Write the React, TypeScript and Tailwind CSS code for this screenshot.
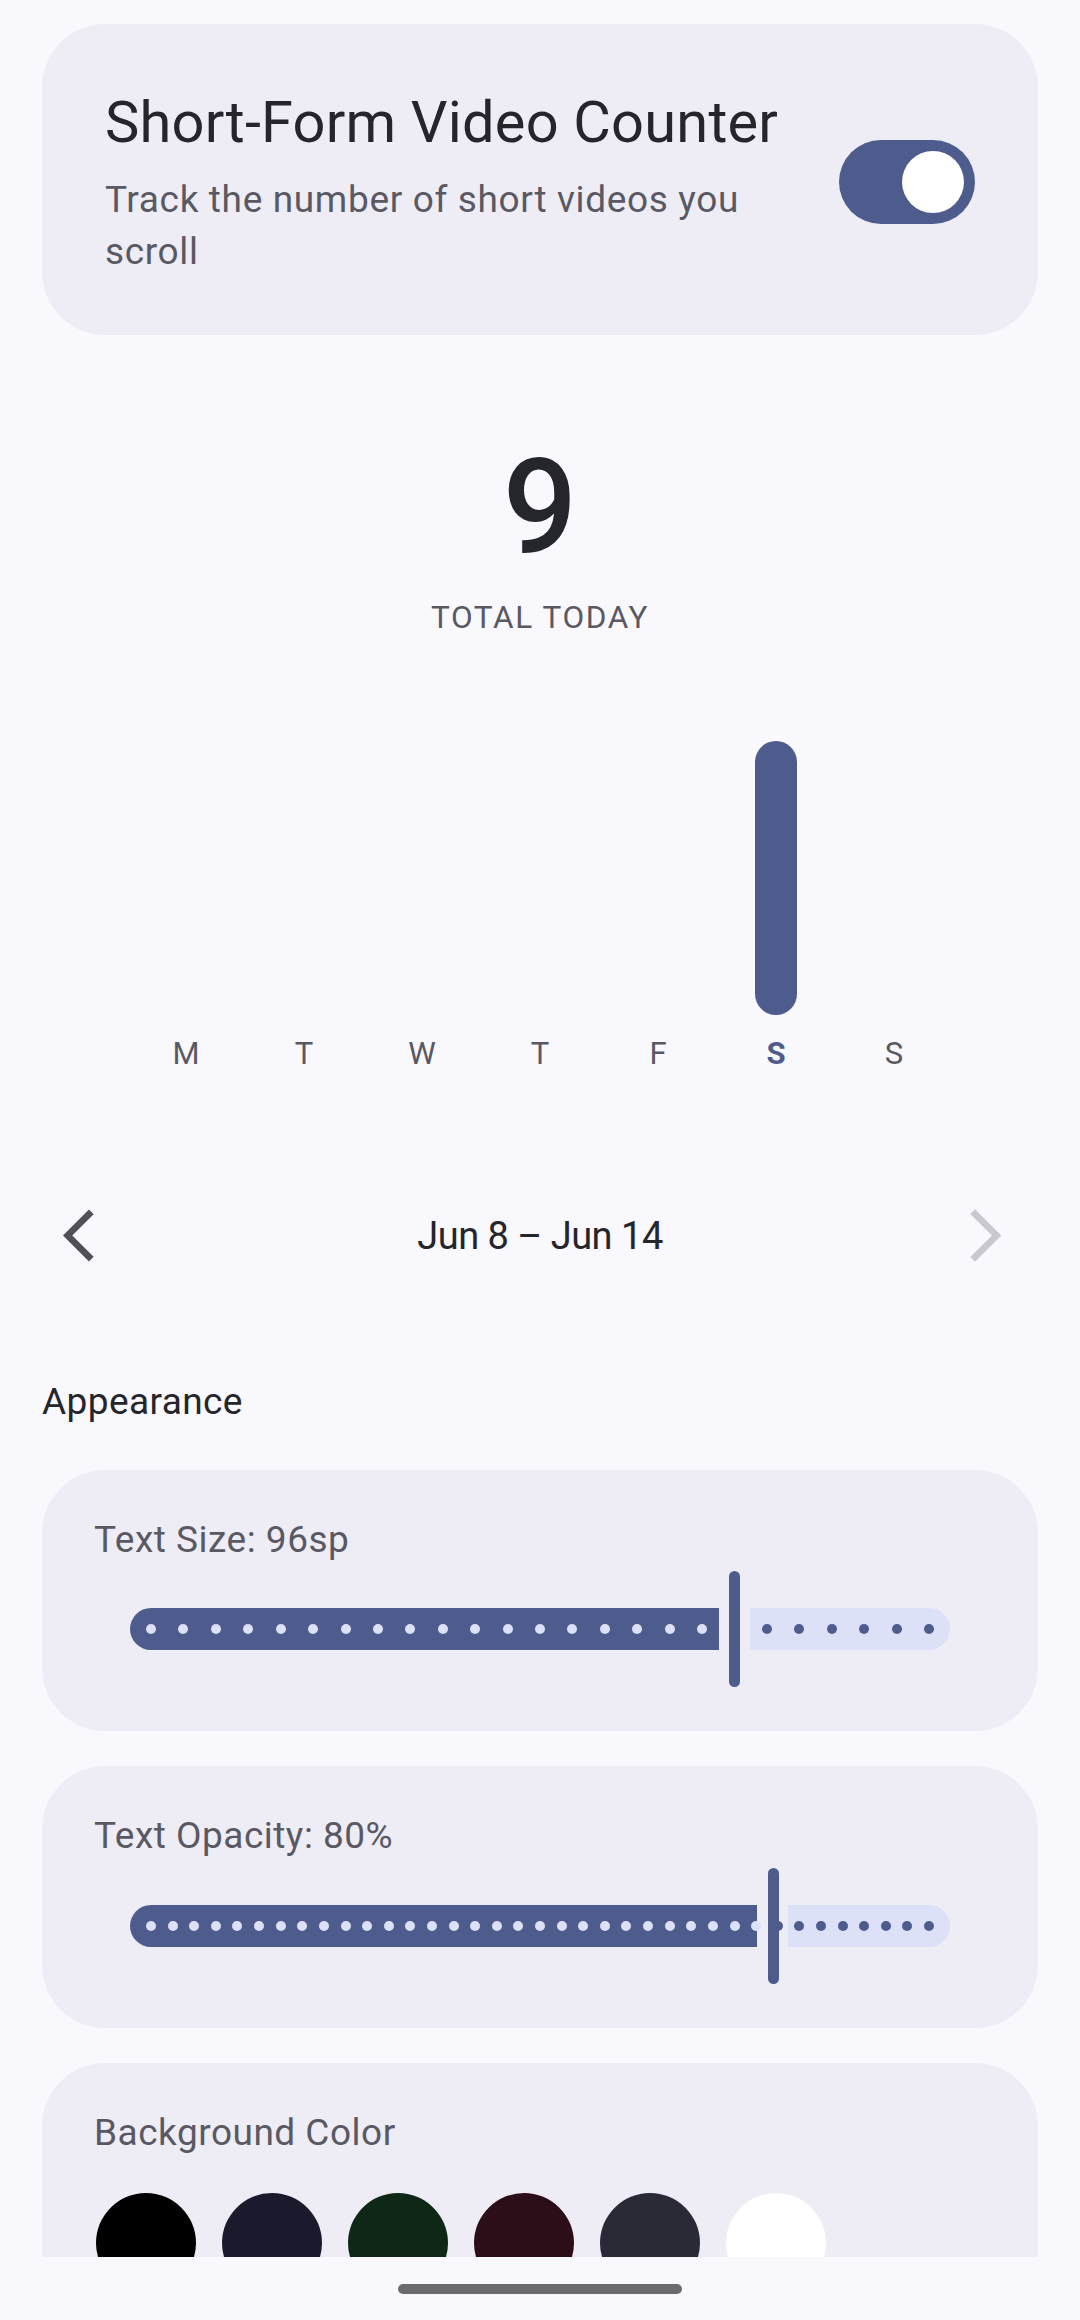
import React from 'react';

const days = [
    { label: 'M', count: 0 },
    { label: 'T', count: 0 },
    { label: 'W', count: 0 },
    { label: 'T', count: 0 },
    { label: 'F', count: 0 },
    { label: 'S', count: 9, today: true },
    { label: 'S', count: 0 },
];

const swatches = ['#000000', '#1b1a2d', '#0e2717', '#2c0e18', '#2a2936', '#ffffff'];

// Slider with stop dots, thumb as a thin vertical bar (Material 3 style)
const StopSlider: React.FC<{ value: number; steps: number }> = ({ value, steps }) => {
    const pos = (f: number, off: number) => `calc(21px + (100% - 42px) * ${f} + ${off}px)`;
    const dots = Array.from({ length: steps + 1 }, (_, i) => i / steps);

    return (
        <div className="relative h-[116px] mx-[36px]">
            <div
                className="absolute top-[37px] h-[42px] left-0 bg-[#4d5c8c] rounded-l-full rounded-r-[5px]"
                style={{ width: pos(value, -16) }}
            />
            <div
                className="absolute top-[37px] h-[42px] right-0 bg-[#dce1f8] rounded-r-full rounded-l-[5px]"
                style={{ left: pos(value, 15) }}
            />
            {dots.map((f, i) => (
                <div
                    key={i}
                    className={`absolute top-[53px] w-[10px] h-[10px] rounded-full ${f < value ? 'bg-[#dce1f8]' : 'bg-[#4d5c8c]'}`}
                    style={{ left: pos(f, -5) }}
                />
            ))}
            <div
                className="absolute top-0 h-[116px] w-[11px] rounded-full bg-[#4d5c8c]"
                style={{ left: pos(value, -5.5) }}
            />
        </div>
    );
};

const SettingCard: React.FC<{ label: string; children: React.ReactNode; className?: string }> = ({ label, children, className }) => (
    <div className={`bg-[#eeedf6] rounded-[63px] px-[52px] pt-[44px] pb-[44px] ${className || ''}`}>
        <p className="text-[37px] leading-[52.5px] tracking-[0.5px] text-[#5a5963]">{label}</p>
        {children}
    </div>
);

export default function App() {
    const max = Math.max(...days.map(d => d.count), 1);

    return (
        <div className="w-[1080px] h-[2320px] bg-[#f9f8fd] flex flex-col font-['Roboto',sans-serif] overflow-hidden">
            <div className="h-[2257px] overflow-hidden">
                <div className="px-[42px] pt-[24px] flex flex-col">
                    {/* Header card */}
                    <div className="bg-[#eeedf6] rounded-[63px] px-[63px] pt-[62px] pb-[56px] flex items-center gap-[42px]">
                        <div className="flex-1 min-w-0">
                            <h1 className="text-[57.75px] leading-[73.5px] tracking-[0.2px] text-[#25252c] whitespace-nowrap">Short-Form Video Counter</h1>
                            <p className="mt-[14px] text-[37px] leading-[52.5px] tracking-[0.65px] text-[#5a5963]">
                                Track the number of short videos you scroll
                            </p>
                        </div>
                        <div className="relative w-[136px] h-[84px] rounded-full bg-[#4d5c8c] shrink-0">
                            <div className="absolute right-[11px] top-[11px] w-[62px] h-[62px] rounded-full bg-white" />
                        </div>
                    </div>

                    {/* Today total */}
                    <div className="mt-[107px] flex flex-col items-center">
                        <span className="text-[131px] leading-none font-medium text-[#25252c]">9</span>
                        <span className="mt-[29px] text-[31.5px] leading-none tracking-[1.6px] text-[#5a5963]">TOTAL TODAY</span>
                    </div>

                    {/* Weekly chart */}
                    <div className="mt-[108px] px-[85px] grid grid-cols-7">
                        {days.map((d, i) => (
                            <div key={i} className="flex flex-col items-center">
                                <div className="h-[274px] flex items-end">
                                    {d.count > 0 && (
                                        <div className="w-[42px] rounded-full bg-[#4d5c8c]" style={{ height: `${(d.count / max) * 274}px` }} />
                                    )}
                                </div>
                                <span className={`mt-[23px] text-[31px] leading-none ${d.today ? 'font-bold text-[#4d5c8c]' : 'text-[#5a5963]'}`}>
                                    {d.label}
                                </span>
                            </div>
                        ))}
                    </div>

                    {/* Week navigation */}
                    <div className="mt-[135px] h-[63px] px-[21px] flex items-center justify-between">
                        <svg viewBox="0 0 24 24" className="w-[63px] h-[63px]" fill="#505059">
                            <path d="M11.67 3.87 9.9 2.1 0 12l9.9 9.9 1.77-1.77L3.54 12z" />
                        </svg>
                        <span className="text-[38px] leading-none tracking-[-0.5px] text-[#25252c]">Jun 8 – Jun 14</span>
                        <svg viewBox="0 0 24 24" className="w-[63px] h-[63px]" fill="#c8c8ce">
                            <path d="M6.23 20.23 8 22l10-10L8 2 6.23 3.77 14.46 12z" />
                        </svg>
                    </div>

                    {/* Appearance */}
                    <p className="mt-[109px] text-[37px] leading-[52.5px] tracking-[0.4px] text-[#25252c]">Appearance</p>

                    <SettingCard label="Text Size: 96sp" className="mt-[41px]">
                        <div className="mt-[5px]">
                            <StopSlider value={0.75} steps={24} />
                        </div>
                    </SettingCard>

                    <SettingCard label="Text Opacity: 80%" className="mt-[35px]">
                        <div className="mt-[5px]">
                            <StopSlider value={0.8} steps={36} />
                        </div>
                    </SettingCard>

                    <SettingCard label="Background Color" className="mt-[35px]">
                        <div className="mt-[34px] flex gap-[26px] pl-[2px]">
                            {swatches.map(c => (
                                <div key={c} className="w-[100px] h-[100px] rounded-full shrink-0" style={{ backgroundColor: c }} />
                            ))}
                        </div>
                    </SettingCard>
                </div>
            </div>

            {/* Gesture bar */}
            <div className="h-[63px] flex items-center justify-center">
                <div className="w-[284px] h-[10px] rounded-full bg-[#6b6b70]" />
            </div>
        </div>
    );
}
